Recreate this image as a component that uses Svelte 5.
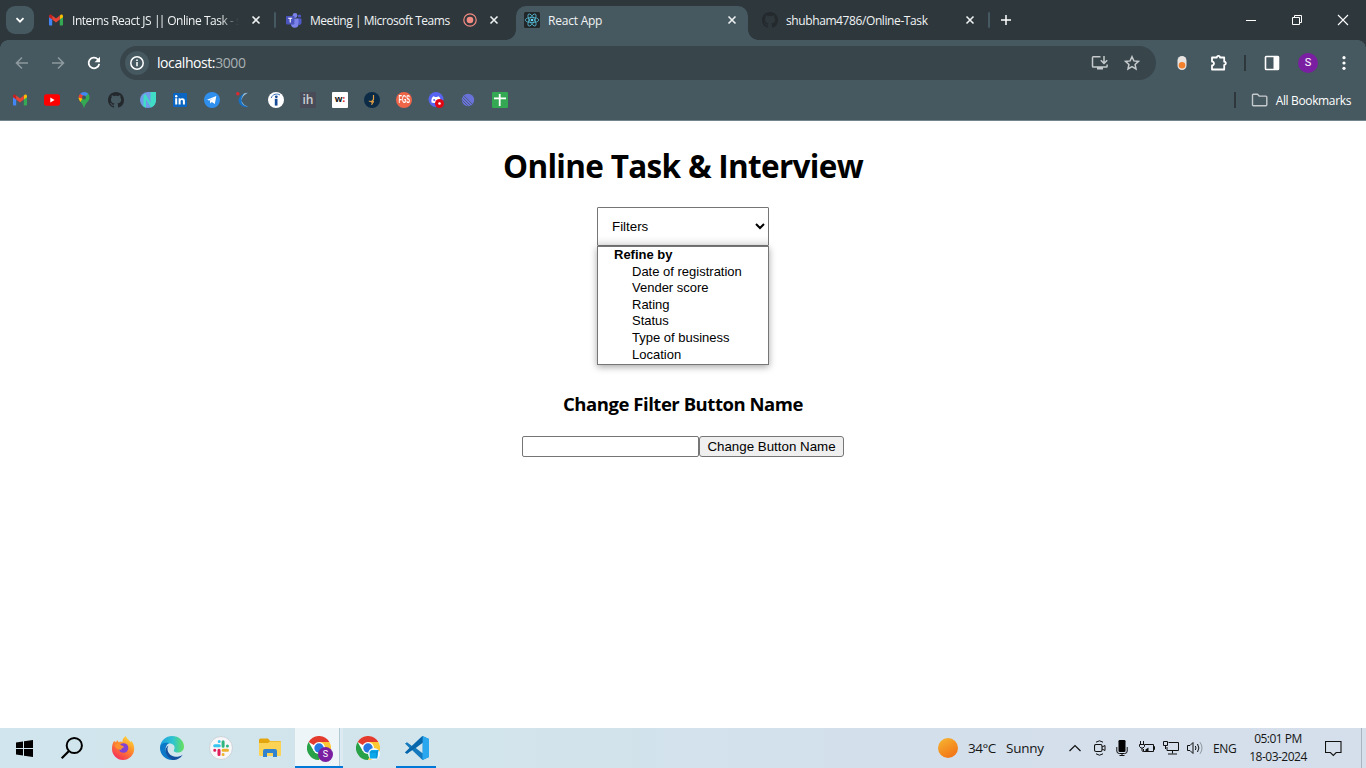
<script>
  const options = ['Date of registration', 'Vender score', 'Rating', 'Status', 'Type of business', 'Location'];
  let name = $state('');
</script>

{#snippet gmail()}
  <svg width="16" height="16" viewBox="0 0 16 16">
    <path d="M1 4.500v8.200c0 .4.4.8.8.8h2.400V6.800z" fill="#4285f4" />
    <path d="M15 4.500v8.200c0 .4-.4.8-.8.8h-2.400V6.800z" fill="#34a853" />
    <path d="M11.800 3.600v4L15 5.200V4c0-1.500-1.600-2-2.500-1.100z" fill="#fbbc04" />
    <path d="M1 4v1.200l3.200 2.400v-4l-.7-.7C2.600 2 1 2.500 1 4z" fill="#c5221f" />
    <path d="M4.200 3.600v4L8 10.400l3.800-2.800v-4L8 6.500z" fill="#ea4335" />
  </svg>
{/snippet}

{#snippet github(color)}
  <svg width="16" height="16" viewBox="0 0 16 16">
    <path fill={color} d="M8 0C3.580 0 0 3.580 0 8c0 3.540 2.290 6.530 5.470 7.590.4.070.55-.17.55-.38 0-.19-.01-.82-.01-1.490-2.010.37-2.530-.49-2.690-.94-.09-.23-.48-.94-.82-1.130-.28-.15-.68-.52-.01-.53.63-.01 1.080.58 1.230.82.72 1.210 1.870.87 2.330.66.07-.52.28-.87.51-1.070-1.780-.2-3.640-.89-3.640-3.950 0-.87.31-1.590.82-2.150-.08-.2-.36-1.020.08-2.120 0 0 .67-.21 2.200.82.64-.18 1.320-.27 2-.27s1.360.09 2 .27c1.530-1.040 2.200-.82 2.200-.82.44 1.100.16 1.920.08 2.120.51.56.82 1.270.82 2.150 0 3.070-1.870 3.750-3.650 3.950.29.25.54.73.54 1.480 0 1.070-.01 1.930-.01 2.200 0 .21.15.46.55.38A8.010 8.010 0 0 0 16 8c0-4.420-3.580-8-8-8z" />
  </svg>
{/snippet}

{#snippet close()}
  <svg class="close" width="16" height="16" viewBox="0 0 16 16"><path d="M4.500 4.500l7 7M11.500 4.500l-7 7" stroke="#eef1f2" stroke-width="1.600" fill="none" /></svg>
{/snippet}

{#snippet chrome()}
  <svg width="24" height="24" viewBox="0 0 24 24">
    <circle cx="12" cy="12" r="12" fill="#fff" />
    <path d="M12 12L1.600 6A12 12 0 0 1 22.400 6z" fill="#e33b2e" />
    <path d="M1.600 6A12 12 0 0 0 12 24l5.200-9L12 12 6.800 15z" fill="#28a148" />
    <path d="M12 24A12 12 0 0 0 22.400 6H12l5.200 9z" fill="#fcc934" />
    <circle cx="12" cy="12" r="6" fill="#fff" />
    <circle cx="12" cy="12" r="4.700" fill="#2878e4" />
  </svg>
{/snippet}

<div class="screen">
  <header class="strip">
    <button class="search-tabs" aria-label="Search tabs">
      <svg width="16" height="16" viewBox="0 0 16 16"><path d="M4.500 6.200L8 9.700l3.500-3.500" stroke="#fff" stroke-width="1.800" fill="none" /></svg>
    </button>
    <div class="tab">
      {@render gmail()}
      <span class="title fade t1">Interns React JS <span class="pipes">||</span> Online Task - s</span>
      {@render close()}
    </div>
    <div class="tab">
      <svg width="16" height="16" viewBox="0 0 16 16">
        <circle cx="9" cy="3.500" r="2.400" fill="#7b83eb" /><circle cx="13.500" cy="4" r="1.600" fill="#5059c9" />
        <path d="M11 6.500h4.500v4.200a2.200 2.200 0 0 1-3 2.100z" fill="#5059c9" />
        <path d="M5 6.500h7.500V12a3.700 3.700 0 0 1-7.500 0z" fill="#7b83eb" />
        <rect x="0" y="4" width="8.400" height="8.400" rx=".8" fill="#4b53bc" />
        <path d="M2.200 6.300h4M4.200 6.300v4.200" stroke="#fff" stroke-width="1.100" />
      </svg>
      <span class="title t2">Meeting | Microsoft Teams</span>
      <svg class="rec" width="14" height="14" viewBox="0 0 14 14"><circle cx="7" cy="7" r="6.200" fill="none" stroke="#f28b82" stroke-width="1.200" /><circle cx="7" cy="7" r="3.300" fill="#f28b82" /></svg>
      {@render close()}
    </div>
    <div class="tab active">
      <svg width="16" height="16" viewBox="0 0 16 16">
        <rect width="16" height="16" rx="1.500" fill="#222629" />
        <g fill="none" stroke="#53b9d1" stroke-width=".8"><ellipse cx="8" cy="8" rx="6.800" ry="2.600" /><ellipse cx="8" cy="8" rx="6.800" ry="2.600" transform="rotate(60 8 8)" /><ellipse cx="8" cy="8" rx="6.800" ry="2.600" transform="rotate(120 8 8)" /></g>
        <circle cx="8" cy="8" r="1.300" fill="#61dafb" />
      </svg>
      <span class="title t3">React App</span>
      {@render close()}
    </div>
    <div class="tab">
      {@render github('#24292e')}
      <span class="title t4">shubham4786/Online-Task</span>
      {@render close()}
    </div>
    <svg class="plus" width="16" height="16" viewBox="0 0 16 16"><path d="M8 3v10M3 8h10" stroke="#fff" stroke-width="1.500" /></svg>
    <div class="window">
      <svg width="46" height="40" viewBox="0 0 46 40"><path d="M18 20.500h10" stroke="#fff" /></svg>
      <svg width="46" height="40" viewBox="0 0 46 40"><path d="M18.500 17.500h7v7h-7zM20.500 17.500v-2h7v7h-2" stroke="#fff" fill="none" /></svg>
      <svg width="46" height="40" viewBox="0 0 46 40"><path d="M18 15l10 10M28 15L18 25" stroke="#fff" stroke-width="1.100" /></svg>
    </div>
  </header>

  <div class="tools">
    <nav class="bar">
      <svg width="16" height="16" viewBox="0 0 16 16"><path d="M14 8H2.800M8 2.500L2.500 8 8 13.500" stroke="#8d999e" stroke-width="1.600" fill="none" /></svg>
      <svg width="16" height="16" viewBox="0 0 16 16"><path d="M2 8h11.200M8 2.500L13.500 8 8 13.500" stroke="#8d999e" stroke-width="1.600" fill="none" /></svg>
      <svg width="16" height="16" viewBox="0 0 16 16"><path d="M13.200 8.800A5.300 5.300 0 1 1 11.800 4.300L13.300 6" stroke="#fff" stroke-width="1.800" fill="none" /><path d="M14 1.800v5.400H8.600z" fill="#fff" /></svg>
      <div class="omnibox">
        <span class="info"><svg width="16" height="16" viewBox="0 0 16 16"><circle cx="8" cy="8" r="6.200" fill="none" stroke="#fff" stroke-width="1.500" /><path d="M8 7v4.300M8 4.500v1.600" stroke="#fff" stroke-width="1.500" /></svg></span>
        <span class="url">localhost:<i>3000</i></span>
        <svg width="18" height="16" viewBox="0 0 18 16"><path d="M9.500 1.800H2.300q-.8 0-.8.8v8.600q0 .8.800.8h13q.8 0 .8-.8V9.500M13 1v7.500M9.800 5.300L13 8.500l3.200-3.200" stroke="#c5cacc" stroke-width="1.500" fill="none" /><path d="M6 12h6v2.500H6z" fill="#c5cacc" /></svg>
        <svg width="16" height="16" viewBox="0 0 16 16"><path d="M8 1.700l1.900 4.200 4.600.5-3.400 3.100.9 4.500-4-2.300L4 14l.9-4.500L1.500 6.400l4.600-.5z" stroke="#c5cacc" stroke-width="1.500" fill="none" /></svg>
      </div>
      <svg class="ext" width="10" height="14" viewBox="0 0 10 14"><rect x=".5" width="9" height="14" rx="4.500" fill="#e8e4e1" /><circle cx="5" cy="9.300" r="3.300" fill="#f4812c" /></svg>
      <svg class="puzzle" width="18" height="18" viewBox="0 0 18 18"><path d="M2 3.500h4.800a1.600 1.600 0 0 1 3.200 0h4.200v4.200a1.500 1.500 0 0 1 0 3.200v4.600H2v-4a2 2 0 0 0 0-4z" stroke="#fff" stroke-width="1.800" fill="none" stroke-linejoin="round" /></svg>
      <span class="divider"></span>
      <svg class="side" width="16" height="16" viewBox="0 0 16 16"><rect x="1.500" y="1.500" width="13" height="13" rx=".7" fill="none" stroke="#fff" stroke-width="1.600" /><path d="M9.500 1.500h5v13h-5z" fill="#fff" /></svg>
      <span class="avatar">S</span>
      <svg class="dots" width="6" height="16" viewBox="0 0 6 16" fill="#fff"><circle cx="3" cy="2.700" r="1.600" /><circle cx="3" cy="8" r="1.600" /><circle cx="3" cy="13.300" r="1.600" /></svg>
    </nav>

    <nav class="bookmarks">
      {@render gmail()}
      <svg width="16" height="16" viewBox="0 0 16 16"><rect x="0" y="2.300" width="16" height="11.400" rx="2.300" fill="#f00" /><path d="M6.300 5.500v5L10.600 8z" fill="#fff" /></svg>
      <svg width="16" height="16" viewBox="0 0 16 16">
        <path d="M2.600 5.500c0 1.800.7 3 2 4.600l5-5.800L8 3.500z" fill="#fbbc04" /><path d="M9.700.3a5.400 5.400 0 0 1 3.800 5.200c0 4-4.200 5.400-5.100 9.800q-.4 1-.8 0C7.100 13 5.800 11.600 4.600 10.100z" fill="#34a853" /><path d="M4 2A5.500 5.500 0 0 1 12.300 2L8 5.500z" fill="#4285f4" />
        <path d="M4 2a5.300 5.300 0 0 0-1.400 3.500l3 1.100L8 4z" fill="#ea4335" /><circle cx="8" cy="5.500" r="2" fill="#40545f" />
      </svg>
      {@render github('#24292e')}
      <svg width="16" height="16" viewBox="0 0 16 16"><path d="M8 0h8v8a8 8 0 1 1-8-8z" fill="#6f9be8" /><path d="M3.500 14.600V3.500L5.500 2l5 9V0H16v8a8 8 0 0 1-5 7.400L6 7v8.700z" fill="#41dcc6" /></svg>
      <svg width="16" height="16" viewBox="0 0 16 16"><rect x="1" y="1" width="14" height="14" rx="1" fill="#0a66c2" /><path d="M3.200 6.300h2v6.300h-2zM6.600 6.300h1.900v1c.9-1.700 4.400-1.500 4.400 1.500v3.800h-2V9.300c0-1.800-2.300-1.600-2.300.1v3.200h-2z" fill="#fff" /><circle cx="4.200" cy="4.200" r="1.200" fill="#fff" /></svg>
      <svg width="16" height="16" viewBox="0 0 16 16"><circle cx="8" cy="8" r="8" fill="#2f8fee" /><path d="M3 7.800l9.300-3.700-1.500 8-3-2.200-1.500 1.500-.5-2.800L10 6 5 8.600z" fill="#fff" /></svg>
      <svg width="16" height="16" viewBox="0 0 16 16"><path d="M8 1.500C3 4 1.500 8 3.500 11.500 5.500 14.800 8.500 15.500 13 15 8.500 14 6 11.500 5.800 8.500 5.600 5.500 7 3 12 .8 9.500 1 8.500 1.200 8 1.500z" fill="#1670c4" /><path d="M8 1.500Q10 .8 12 .8 6.500 3.500 5.800 7.500L5.200 7.500Q6 4 8 1.500zM5.800 9.500Q7.500 13.500 13 15 7 14 5.200 9.500z" fill="#a9c3d2" /><circle cx="1.800" cy="1.800" r="1.700" fill="#e3262e" /></svg>
      <svg width="16" height="16" viewBox="0 0 16 16"><circle cx="8" cy="8" r="8" fill="#fff" /><path d="M6.800 6.800h2.700v6.800H6.800z" fill="#164b98" /><circle cx="8.300" cy="4.800" r="1.400" fill="#164b98" /><path d="M3.200 6C4.500 2 9 1.200 12 3" stroke="#3974bd" fill="none" /></svg>
      <span class="ih">ih</span>
      <span class="w">w<b>:</b></span>
      <svg width="16" height="16" viewBox="0 0 16 16"><circle cx="8" cy="8" r="8" fill="#0b2b46" /><path d="M9.500 3v4.500L7 10.500M9.500 9.500L7.500 12.800" stroke="#e5a143" stroke-width="1.200" fill="none" /><path d="M4.800 9.200l5.200.5" stroke="#e5a143" /></svg>
      <span class="fgs"><em>FGS</em></span>
      <svg width="16" height="16" viewBox="0 0 16 16"><circle cx="8" cy="7.500" r="7.500" fill="#5865f2" /><path d="M3.500 10.500C3 7.500 4 5 5.700 4.300L7 5h2l1.300-.7C12 5 13 7.500 12.500 10.500L10 11H6z" fill="#fff" /><circle cx="6.200" cy="8" r="1" fill="#5865f2" /><circle cx="11.500" cy="11.500" r="4.500" fill="#e10613" /><circle cx="11.500" cy="11.500" r="1.300" fill="#fff" /></svg>
      <svg width="16" height="16" viewBox="0 0 16 16"><circle cx="8" cy="8" r="6.200" fill="#6872d9" /><path d="M2.500 5.500l8 8M2 8l6 6M4 3.800l8.500 8.700" stroke="#465860" stroke-width=".7" /></svg>
      <svg width="16" height="16" viewBox="0 0 16 16"><rect width="16" height="16" rx="1.200" fill="#34a853" /><path d="M2 6.300h12M7.700 2v12" stroke="#fff" stroke-width="1.800" /></svg>
      <span class="divider"></span>
      <svg class="folder" width="18" height="16" viewBox="0 0 18 16"><path d="M1.500 3.300q0-1 1-1h4l1.700 1.800h6.600q1 0 1 1v7.600q0 1-1 1H2.500q-1 0-1-1z" fill="none" stroke="#c5cacc" stroke-width="1.400" /></svg>
      <span class="all">All Bookmarks</span>
    </nav>
  </div>

  <main>
    <h1>Online Task &amp; Interview</h1>
    <div class="filter">
      <select aria-label="Filters"><option>Filters</option></select>
      <ul>
        <li class="group">Refine by</li>
        {#each options as option}<li>{option}</li>{/each}
      </ul>
    </div>
    <h3>Change Filter Button Name</h3>
    <form><input type="text" bind:value={name} /><button type="button">Change Button Name</button></form>
  </main>

  <footer>
    <div class="app first"><svg width="17" height="17" viewBox="0 0 17 17"><path d="M0 2.400l7-1v6.700H0zM8 1.200L17 0v8.100H8zM0 9h7v6.600l-7-1zM8 9h9v8l-9-1.200z" fill="#000" /></svg></div>
    <div class="app first"><svg width="24" height="24" viewBox="0 0 24 24"><circle cx="14.300" cy="9.500" r="7.600" fill="none" stroke="#000" stroke-width="2" /><path d="M9 15L1.700 22.300" stroke="#000" stroke-width="2.200" /></svg></div>
    <div class="app"><svg width="24" height="24" viewBox="0 0 24 24">
      <defs><linearGradient id="ff" x1=".8" y1="0" x2=".2" y2="1"><stop offset="0" stop-color="#ffdf3d" /><stop offset=".45" stop-color="#ff8a2b" /><stop offset="1" stop-color="#f4265f" /></linearGradient></defs>
      <path d="M3 5l2 1.300L6.200 4l1.500 2.200C9 5 10.500 5.300 11.500 6 11.300 3 13 1 15 0c.5 3 3 3.500 4.500 6l1-1c2 2 2.700 5 2.700 8C23.200 19 18 24 12 24S1 19 1 13c0-3 .5-6 2-8z" fill="url(#ff)" /><circle cx="12.500" cy="12" r="4.800" fill="#8242d3" /><path d="M3.500 9c3-2 5-1.500 6.500.2 1.500.4 2.800.8 3 2-1.700.6-2.800 1.300-2.600 2.500-3 .3-5.500-1-6.900-4.700z" fill="#ff9030" />
    </svg></div>
    <div class="app"><svg width="24" height="24" viewBox="0 0 24 24">
      <defs><linearGradient id="e1"><stop offset="0" stop-color="#1b9de2" /><stop offset=".55" stop-color="#30c5cf" /><stop offset="1" stop-color="#67e05b" /></linearGradient></defs>
      <path d="M0 11C1 4 6 0 12 0c7 0 12 5 12 10.500 0 4-3 6-6.500 6-2.500 0-4.300-1-3.500-2.500 2-4-1-6.500-4.500-6.500C5 7.500 1 9 0 11z" fill="url(#e1)" />
      <path d="M0 12c0-4.500 5-6 9-4.700-3 1.500-4 5-3 8.700 1 4 4.500 7 8.500 7.700C6 25 0 19 0 12z" fill="#0c78c8" /><path d="M8.500 9.500C6 13 8 19 14 20.500c3 .7 6 0 8.600-1.800C20.500 22.500 16.500 24 13 24 5 21 3.500 12.500 8.500 9.500z" fill="#124f9e" />
    </svg></div>
    <div class="app"><svg width="24" height="24" viewBox="0 0 24 24"><circle cx="12" cy="12" r="11.500" fill="#f7f6f8" stroke="#c5cdd1" stroke-width=".8" />
      <g fill="none" stroke-width="3" stroke-linecap="round"><path d="M5.700 9.800h4.600M10.200 5.500v.1" stroke="#36c5f0" /><path d="M14.100 5.700v4.500M18.400 10v.1" stroke="#2eb67d" /><path d="M14.100 14.200h4.400M14.100 18.400v.1" stroke="#ecb22e" /><path d="M10 14.200v4.400M5.700 14.200h.1" stroke="#e01e5a" /></g></svg></div>
    <div class="app"><svg width="22" height="20" viewBox="0 0 22 20"><path d="M0 2q0-1.500 1.500-1.500H9L11 3h10q1 0 1 1v3H0z" fill="#e5a50d" /><path d="M0 5h9l2-1.500h11V17q0 1-1 1H1q-1 0-1-1z" fill="#fcd354" /><path d="M4 19v-6q0-2 2-2h10q2 0 2 2v6h-4v-4H8v4z" fill="#3283cf" /></svg></div>
    <div class="app current"><div class="stack">{@render chrome()}<span class="badge">S</span></div></div>
    <div class="app"><div class="stack">{@render chrome()}<svg class="cube" width="12" height="12" viewBox="0 0 12 12"><circle cx="6" cy="6" r="6" fill="#eef8fc" /><path d="M1.500 4l2-2h7L9.500 9l-1 1.500H2z" fill="#08a8ea" /><path d="M2 4h6.800v6.500M8.800 4l1.700-2" stroke="#087bc2" fill="none" stroke-width=".6" /></svg></div></div>
    <div class="app open"><svg width="24" height="24" viewBox="0 0 24 24"><path d="M17.500 0L24 3v18l-6.500 3L7 14l-5 3.800L0 16.500 4.500 12 0 7.500l2-1.300L7 10z" fill="#1479bd" /><path d="M17.500 0L24 3v18l-6.500 3z" fill="#2aa7ef" /><path d="M17.500 6.800v10.400L10.800 12z" fill="#d3e6ee" /><path d="M0 16.500L17.500 0v6.800L2 17.800z" fill="#0866aa" /></svg></div>
    <div class="tray">
      <span class="sun"></span>
      <span class="temp">34°C</span><span class="sunny">Sunny</span>
      <svg class="up" width="12" height="8" viewBox="0 0 12 8"><path d="M.5 7L6 1.500 11.500 7" fill="none" stroke="#111" stroke-width="1.200" /></svg>
      <svg class="meet" width="12" height="16" viewBox="0 0 12 16"><path d="M2 2.200Q5.500-.6 9 2.200M2 13.800q3.500 2.800 7 0" fill="none" stroke="#111" /><rect x=".5" y="4.500" width="7.500" height="7" rx="1.500" fill="none" stroke="#111" stroke-width="1.100" /><path d="M8 7l3-1.500v5L8 9" fill="none" stroke="#111" /></svg>
      <svg class="mic" width="12" height="16" viewBox="0 0 12 16"><rect x="2.500" y="0" width="7" height="12" rx="1.300" fill="#000" /><path d="M.8 7v4q0 2.500 2.500 2.500h5.400q2.500 0 2.500-2.500V7M6 13.500V16M3.500 15.500h5" stroke="#111" fill="none" /></svg>
      <svg class="battery" width="16" height="14" viewBox="0 0 16 14"><path d="M6 3.500h8.500v7H4.500V8M14.500 5.500h1v3h-1M1.500 0v3M4.500 0v3M.5 3.500h5v2L4 7H2L.5 5.500zM3 7v2.500q0 1 1.500 1" stroke="#111" fill="none" /><path d="M6.500 8.500l3-2v3.500h-3z" fill="#111" /></svg>
      <svg class="net" width="16" height="14" viewBox="0 0 16 14"><path d="M5.500 1.500h10v8H4V6M9.500 9.500v3M5 13h9" stroke="#111" fill="none" /><path d="M.5.500h4v4h-4zM2.500 4.500V8" stroke="#111" fill="none" /></svg>
      <svg class="vol" width="17" height="14" viewBox="0 0 17 14"><path d="M.5 4.500h2.500L6 1.500v11L3 9.500H.5z" fill="none" stroke="#111" /><path d="M8.300 5q1.400 2 0 4M10.500 3q2.800 4 0 8" fill="none" stroke="#111" /><path d="M13 1.200q4 5.800 0 11.600" fill="none" stroke="#8d969f" /></svg>
      <span class="eng">ENG</span>
      <span class="clock"><span class="time">05:01 PM</span><span class="date">18-03-2024</span></span>
      <svg class="note" width="17" height="17" viewBox="0 0 17 17"><path d="M.5 1.500h15.500v11h-4.800L8.300 15.500 5.400 12.500H.5z" fill="none" stroke="#111" stroke-width="1.100" /></svg>
      <span class="edge"></span>
    </div>
  </footer>
</div>

<style>
  :global(body) { margin: 0; overflow: hidden; background: #fff; }
  .screen { width: 1366px; height: 768px; display: flex; flex-direction: column; background: #fff; font-family: "Open Sans", "Noto Sans", sans-serif; color: #000; }
  svg { display: block; flex: none; }
  span { white-space: nowrap; }
  .strip { height: 40px; background: #2d373c; display: flex; align-items: center; padding-left: 6px; }
  .search-tabs { width: 28px; height: 28px; margin-right: 2px; border: 0; padding: 6px; border-radius: 9px; background: #465860; }
  .tab { box-sizing: border-box; width: 238px; height: 40px; padding: 0 10px 0 12px; display: flex; align-items: center; position: relative; z-index: 0; color: #f1f3f4; font-size: 12px; }
  .tab::after { content: ""; position: absolute; right: -2px; top: 12px; width: 2px; height: 16px; background: #465860; border-radius: 1px; }
  .tab:has(+ .active)::after { background: none; }
  .title { flex: 1; margin-left: 8px; line-height: 18px; padding-top: 1px; }
  .fade { max-width: 172px; -webkit-mask-image: linear-gradient(90deg, #000 148px, transparent 167px); mask-image: linear-gradient(90deg, #000 148px, transparent 167px); }
  .t1 { letter-spacing: -.46px; } .t2 { letter-spacing: -.46px; } .t3 { letter-spacing: -.22px; } .t4 { letter-spacing: -.4px; }
  .pipes { letter-spacing: -1.800px; margin-right: 1px; }
  .close { margin-left: auto; }
  .rec { margin-right: 9px; }
  .active::before { content: ""; position: absolute; z-index: -1; left: 4px; right: 2px; top: 6px; bottom: 0; background: #465860; border-radius: 10px 10px 0 0; }
  .active::after { left: -6px; right: -8px; top: 30px; width: auto; height: 10px; z-index: -1; border-radius: 0; background: radial-gradient(circle at 0 0, transparent 9.500px, #465860 10px) left / 10px 10px no-repeat, radial-gradient(circle at 100% 0, transparent 9.500px, #465860 10px) right / 10px 10px no-repeat; }
  .plus { margin-left: 10px; }
  .window { display: flex; margin-left: auto; }
  .tools { box-sizing: border-box; height: 81px; border-bottom: 1px solid #73848c; background: radial-gradient(circle at 8px 8px, #465860 7.500px, #2d373c 8px) left top / 8px 8px no-repeat, radial-gradient(circle at 0 8px, #465860 7.500px, #2d373c 8px) right top / 8px 8px no-repeat, #465860; }
  .bar { height: 40px; display: flex; align-items: center; padding: 6px 0 0 14px; box-sizing: border-box; }
  .bar > svg:nth-child(-n+3) { margin-right: 20px; }
  .bar > svg:nth-child(3) { margin-right: 18px; }
  .omnibox { box-sizing: border-box; width: 1036px; height: 34px; border-radius: 17px; background: #38454b; display: flex; align-items: center; padding: 0 16px 0 5px; gap: 15px; }
  .info { width: 24px; height: 24px; display: grid; place-items: center; border-radius: 50%; background: #465860; }
  .url { flex: 1; margin-left: -7px; padding-bottom: 2px; font-size: 14px; letter-spacing: -.42px; color: #fff; }
  .url i { color: #a9b0b3; font-style: normal; }
  .ext { margin-left: 21px; } .puzzle { margin-left: 23px; }
  .divider { width: 2px; height: 16px; background: #2d373c; margin-left: 16px; }
  .side { margin-left: 18px; }
  .avatar { width: 20px; height: 20px; border-radius: 50%; background: #7b1fa2; color: #fff; font: 11px/20px Roboto, sans-serif; text-align: center; margin-left: 18px; }
  .dots { margin-left: 23px; }
  .bookmarks { height: 40px; display: flex; align-items: center; gap: 16px; padding: 0 15px 0 12px; }
  .bookmarks .divider { margin-left: auto; }
  .ih { width: 16px; height: 16px; background: #494c58; color: #ccd0d4; font-size: 12px; font-weight: 600; line-height: 16px; text-align: center; }
  .w { width: 16px; height: 16px; background: #fff; border-radius: 1px; color: #111; font: bold 9px/14px "Open Sans", sans-serif; text-align: center; }
  .w b { color: #e6262c; }
  .fgs { width: 16px; height: 16px; display: grid; place-items: center; border-radius: 50%; background: #ef6548; color: #fff; font: bold 10px/16px "Liberation Sans", sans-serif; }
  .fgs em { font-style: normal; justify-self: center; margin: 0 -4px; transform: scaleX(.56); }
  .folder { margin-left: -1px; }
  .all { margin-left: -9px; font-size: 12px; letter-spacing: -.36px; color: #fff; }
  main { flex: 1; display: flex; flex-direction: column; align-items: center; }
  h1 { margin: 23px 0 0; font-size: 31.500px; line-height: 43px; font-weight: 700; letter-spacing: -.69px; white-space: nowrap; }
  .filter { margin-top: 20px; width: 172px; height: 158px; font: 13.333px "Liberation Sans", Arial, sans-serif; }
  select { box-sizing: border-box; display: block; width: 172px; height: 39px; padding: 10px; border: 1px solid #767676; border-radius: 1px; background: linear-gradient(#fff 28px, #ededed); color: #000; font: inherit; }
  ul { box-sizing: border-box; height: 119px; margin: 0; padding: 0; border: 1px solid #767676; list-style: none; background: #fff; box-shadow: 0 2px 7px rgba(0, 0, 0, .35); font-size: 13px; }
  li { height: 16.600px; line-height: 16.600px; padding-left: 34px; white-space: nowrap; }
  .group { padding-left: 16px; font-weight: 700; }
  h3 { margin: 26px 0 0; font-size: 18.500px; line-height: 26px; letter-spacing: -.46px; white-space: nowrap; }
  form { display: flex; margin-top: 19px; }
  input { box-sizing: border-box; width: 177px; height: 21px; border: 1px solid #767676; border-radius: 2px; background: #fff; }
  form button { box-sizing: border-box; width: 145px; height: 21px; padding: 0; border: 1px solid #767676; border-radius: 3px; background: #efefef; color: #000; font: 13.333px "Liberation Sans", Arial, sans-serif; white-space: nowrap; }
  footer { height: 40px; display: flex; background: linear-gradient(90deg, #d0e5ed, #d2e4ec 35%, #d3dfeb 70%, #d5dfeb); }
  .app { box-sizing: border-box; width: 49px; height: 40px; display: grid; place-items: center; }
  .first { width: 48px; }
  .first + .first { margin-right: 2px; }
  .current { background: linear-gradient(#0078d7, #0078d7) bottom / 49px 2px no-repeat, linear-gradient(90deg, #edf5f9 44px, #b3c9d3 44px, #b3c9d3 45px, #dceaf1 45px); width: 48px; margin-left: 1px; }
  .current + .app { margin: 0; }
  .open { background: linear-gradient(#0078d7, #0078d7) 4px bottom / 40px 2px no-repeat; }
  .stack { position: relative; width: 24px; height: 24px; }
  .badge { position: absolute; left: 11px; top: 11px; width: 15px; height: 15px; border-radius: 50%; background: #7b1fa2; color: #fff; font: 9px/15px Roboto, sans-serif; text-align: center; }
  .cube { position: absolute; left: 12px; top: 12px; }
  .tray { margin-left: auto; display: flex; align-items: center; font-size: 13.500px; color: #161616; }
  .sun { width: 20px; height: 20px; border-radius: 50%; background: linear-gradient(150deg, #f7b832, #f16a12); }
  .temp { width: 38px; margin-left: 10px; letter-spacing: -.5px; } .sunny { width: 63px; letter-spacing: -.25px; }
  .meet { margin-left: 13px; } .mic { margin-left: 10px; } .battery { margin-left: 11px; } .net { margin-left: 8px; } .vol { margin-left: 8px; }
  .eng { width: 24px; margin-left: 9px; font-size: 12px; letter-spacing: -.4px; }
  .clock { width: 60px; margin-left: 11px; display: grid; justify-items: center; font-size: 12px; line-height: 18px; letter-spacing: -.5px; }
  .note { margin-left: 17px; }
  .edge { width: 4px; height: 40px; margin-left: 19px; border-left: 1px solid #aab5bf; }
</style>
